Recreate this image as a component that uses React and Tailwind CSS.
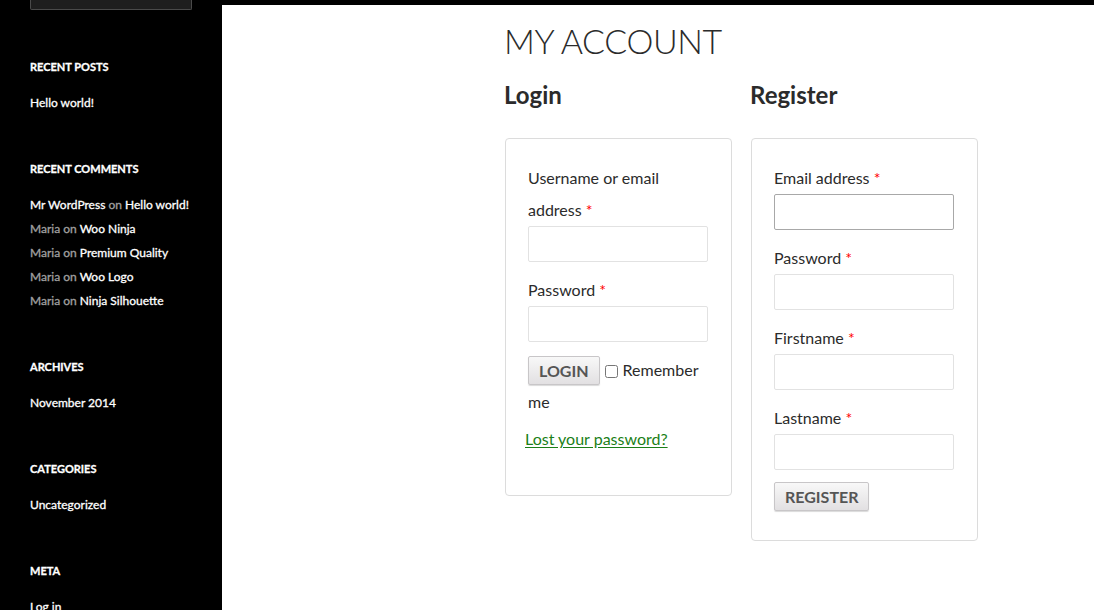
const sections = [
  { title: 'Recent Posts', items: [[null, 'Hello world!']] },
  {
    title: 'Recent Comments',
    items: [
      ['Mr WordPress', 'Hello world!', true],
      ['Maria', 'Woo Ninja'],
      ['Maria', 'Premium Quality'],
      ['Maria', 'Woo Logo'],
      ['Maria', 'Ninja Silhouette'],
    ],
  },
  { title: 'Archives', items: [[null, 'November 2014']] },
  { title: 'Categories', items: [[null, 'Uncategorized']] },
  { title: 'Meta', items: [[null, 'Log in']] },
]

function Sidebar() {
  return (
    <aside className="w-[222px] shrink-0 bg-black pl-[30px] pr-[30px] [-webkit-text-stroke:0.3px]">
      {/* search box, cut off at the top */}
      <div className="w-[162px] h-[10px] bg-[#1e1e1e] border-x border-b border-[#4a4a4a] rounded-b-[2px]" />
      <div className="pt-[49px]">
        {sections.map((s) => (
          <div key={s.title} className="mb-[46px]">
            <h3 className="text-[11px] leading-[16px] font-bold uppercase text-white">{s.title}</h3>
            <ul className="mt-[16px] text-[12px] leading-[24px]">
              {s.items.map(([author, post, authorLink], i) => (
                <li key={i}>
                  {author && (
                    <>
                      <span className={authorLink ? 'text-white' : 'text-[#a0a0a0]'}>{author}</span>
                      <span className="text-[#a0a0a0]"> on </span>
                    </>
                  )}
                  <span className="text-white">{post}</span>
                </li>
              ))}
            </ul>
          </div>
        ))}
      </div>
    </aside>
  )
}

function Label({ children }) {
  return (
    <label className="block text-[16px] leading-[32px] text-[#2b2b2b]">
      {children} <span className="text-[#ff0000]">*</span>
    </label>
  )
}

function Field({ label, focused }) {
  return (
    <div className="mb-[12px]">
      <Label>{label}</Label>
      <input
        type="text"
        className={`block w-[180px] h-[36px] rounded-[2px] bg-white border ${focused ? 'border-[#a8a8a8]' : 'border-[#e2e2e2]'}`}
      />
    </div>
  )
}

function Button({ children, className = '' }) {
  return (
    <button
      type="button"
      className={`h-[29px] px-[10px] text-[16px] leading-[27px] font-bold uppercase text-[#555] bg-gradient-to-b from-[#f8f8f8] to-[#e2e0e2] border border-[#c8c6c8] rounded-[2px] shadow-[0_1px_1px_rgba(0,0,0,0.15)] ${className}`}
    >
      {children}
    </button>
  )
}

export default function App() {
  return (
    <div className="flex min-h-[610px] bg-white" style={{ fontFamily: 'Lato, "Open Sans", sans-serif' }}>
      <Sidebar />
      <main className="flex-1">
        <div className="h-[5px] bg-black" />
        <div className="pl-[283px] pt-[16px] text-[#2b2b2b]">
          <h1 className="-ml-[1px] text-[34px] leading-[40px] font-light uppercase tracking-[-0.4px]">My Account</h1>
          <div className="flex gap-[19px] mt-[19px] items-start">
            <div className="w-[227px]">
              <h2 className="-ml-[1px] text-[24px] leading-[30px] font-bold">Login</h2>
              <div className="mt-[28px] border border-[#dcdcdc] rounded-[4px] pl-[22px] pr-[23px] pt-[23px] pb-[40px]">
                <Field label="Username or email address" />
                <Field label="Password" />
                <div className="text-[16px] leading-[32px]">
                  <Button className="align-top mt-[2px]">Login</Button>
                  <input type="checkbox" className="w-[13px] h-[13px] ml-[5px] mr-[5px] align-middle" />
                  <span>Remember me</span>
                </div>
                <p className="mt-[5px] -ml-[3px] text-[16px] leading-[32px]">
                  <a href="#" className="text-[#1b7f18] underline underline-offset-2">Lost your password?</a>
                </p>
              </div>
            </div>
            <div className="w-[227px]">
              <h2 className="-ml-[1px] text-[24px] leading-[30px] font-bold">Register</h2>
              <div className="mt-[28px] border border-[#dcdcdc] rounded-[4px] pl-[22px] pr-[23px] pt-[23px] pb-[29px]">
                <Field label="Email address" focused />
                <Field label="Password" />
                <Field label="Firstname" />
                <Field label="Lastname" />
                <Button className="block">Register</Button>
              </div>
            </div>
          </div>
        </div>
      </main>
    </div>
  )
}
